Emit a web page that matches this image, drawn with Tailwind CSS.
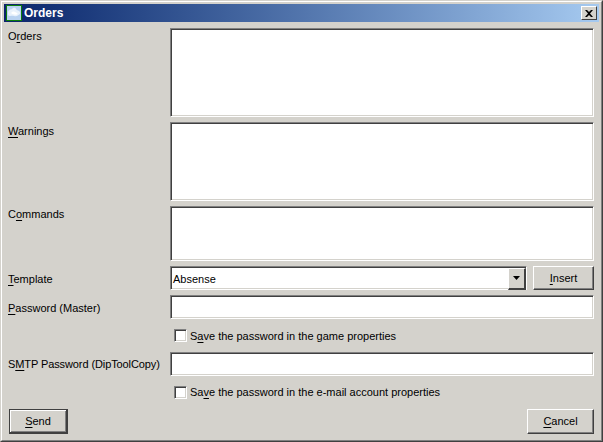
<!DOCTYPE html>
<html lang="en">

<head>
    <meta charset="UTF-8">
    <title>Orders</title>
    <script src="https://cdn.jsdelivr.net/npm/@tailwindcss/browser@4"></script>
</head>

<body class="w-[603px] h-[442px] overflow-hidden bg-[#d4d2cc] font-['Liberation_Sans',sans-serif] text-[11px] text-black">

    <!-- Window frame -->
    <div class="w-[603px] h-[442px] border border-[#d4d2cc] border-r-[#404040] border-b-[#404040]">
        <div class="w-full h-full border border-white border-r-[#808080] border-b-[#808080] p-[2px] flex flex-col">

            <!-- Title bar -->
            <div class="h-[18px] shrink-0 flex items-center justify-between pl-[2px] pr-[2px] bg-gradient-to-r from-[#0a246a] to-[#a6caf0]">
                <div class="flex items-center gap-[2px]">
                    <svg width="16" height="16" viewBox="0 0 16 16">
                        <rect width="16" height="16" fill="#0b7d0b" />
                        <rect x="1" y="1" width="14" height="14" fill="#b9d2f0" />
                        <path d="M2 7c1-3 3-2 4-3s3-2 4 0 3 1 4 3v2c-2 1-3 3-6 2s-4 1-6-1z" fill="#e8f1fb" />
                        <path d="M5 8c1-1 2-2 4-1s2 1 3 2c-2 1-5 1-7-1z" fill="#fff" />
                    </svg>
                    <span class="font-bold text-[12px] text-white">Orders</span>
                </div>
                <button class="w-[16px] h-[14px] bg-[#d4d2cc] border border-white border-r-[#404040] border-b-[#404040] flex items-center justify-center">
                    <svg width="8" height="7" viewBox="0 0 8 7">
                        <path d="M0 0h2l2 2 2-2h2L5 3.500 8 7H6L4 5 2 7H0l3-3.500z" fill="#000" />
                    </svg>
                </button>
            </div>

            <!-- Form -->
            <div class="flex-1 flex flex-col px-[5px] pt-[6px] pb-[6px]">
                <div class="grid grid-cols-[161px_1fr] gap-y-[5px]">
                    <label class="-ml-[1px]">O<span class="underline underline-offset-2">r</span>ders</label>
                    <div class="h-[89px] bg-white border border-[#808080] border-r-white border-b-white shadow-[inset_1px_1px_0_#404040,inset_-1px_-1px_0_#d4d2cc]"></div>

                    <label class="mt-[1px] -ml-[1px]"><span class="underline underline-offset-2">W</span>arnings</label>
                    <div class="h-[79px] bg-white border border-[#808080] border-r-white border-b-white shadow-[inset_1px_1px_0_#404040,inset_-1px_-1px_0_#d4d2cc]"></div>

                    <label class="-ml-[1px]">C<span class="underline underline-offset-2">o</span>mmands</label>
                    <div class="h-[55px] bg-white border border-[#808080] border-r-white border-b-white shadow-[inset_1px_1px_0_#404040,inset_-1px_-1px_0_#d4d2cc]"></div>

                    <label class="self-center mt-[2px] -ml-[1px]"><span class="underline underline-offset-2">T</span>emplate</label>
                    <div class="flex gap-[6px]">
                        <div class="flex-1 h-[24px] flex items-center justify-between pl-[2px] pr-[0px] bg-white border border-[#808080] border-r-white border-b-white shadow-[inset_1px_1px_0_#404040,inset_-1px_-1px_0_#d4d2cc]">
                            <span class="mt-[2px]">Absense</span>
                            <div class="w-[18px] h-[22px] mt-[1px] bg-[#d4d2cc] border border-white border-r-2 border-b-2 border-r-[#404040] border-b-[#404040] flex items-center justify-center">
                                <svg width="7" height="4" viewBox="0 0 7 4"><path d="M0 0h7L3.500 4z" fill="#000" /></svg>
                            </div>
                        </div>
                        <button class="w-[61px] h-[24px] bg-[#d4d2cc] border border-white border-r-[#404040] border-b-[#404040] shadow-[inset_-1px_-1px_0_#808080]"><span class="underline underline-offset-2">I</span>nsert</button>
                    </div>

                    <label class="self-center mt-[2px] -ml-[1px]"><span class="underline underline-offset-2">P</span>assword (Master)</label>
                    <div class="h-[24px] bg-white border border-[#808080] border-r-white border-b-white shadow-[inset_1px_1px_0_#404040,inset_-1px_-1px_0_#d4d2cc]"></div>

                    <div></div>
                    <label class="h-[23px] flex items-center gap-[3px] pl-[4px]">
                        <span class="w-[13px] h-[13px] bg-white border border-[#808080] border-r-white border-b-white shadow-[inset_1px_1px_0_#404040,inset_-1px_-1px_0_#d4d2cc]"></span>
                        <span class="mt-[1px]">S<span class="underline underline-offset-2">a</span>ve the password in the game properties</span>
                    </label>

                    <label class="self-center -ml-[1px] tracking-[-0.1px]">S<span class="underline underline-offset-2">M</span>TP Password (DipToolCopy)</label>
                    <div class="h-[24px] bg-white border border-[#808080] border-r-white border-b-white shadow-[inset_1px_1px_0_#404040,inset_-1px_-1px_0_#d4d2cc]"></div>

                    <div></div>
                    <label class="h-[23px] flex items-center gap-[3px] pl-[4px]">
                        <span class="w-[13px] h-[13px] bg-white border border-[#808080] border-r-white border-b-white shadow-[inset_1px_1px_0_#404040,inset_-1px_-1px_0_#d4d2cc]"></span>
                        <span>Sa<span class="underline underline-offset-2">v</span>e the password in the e-mail account properties</span>
                    </label>
                </div>

                <!-- Buttons -->
                <div class="mt-[5px] flex justify-between">
                    <button class="w-[59px] h-[25px] bg-[#d4d2cc] border border-[#404040] border-r-2 border-b-2 shadow-[inset_1px_1px_0_#fff,inset_-1px_-1px_0_#808080]"><span class="underline underline-offset-2">S</span>end</button>
                    <button class="w-[67px] h-[25px] bg-[#d4d2cc] border border-white border-r-[#404040] border-b-[#404040] shadow-[inset_-1px_-1px_0_#808080]"><span class="underline underline-offset-2">C</span>ancel</button>
                </div>
            </div>
        </div>
    </div>

</body>

</html>
